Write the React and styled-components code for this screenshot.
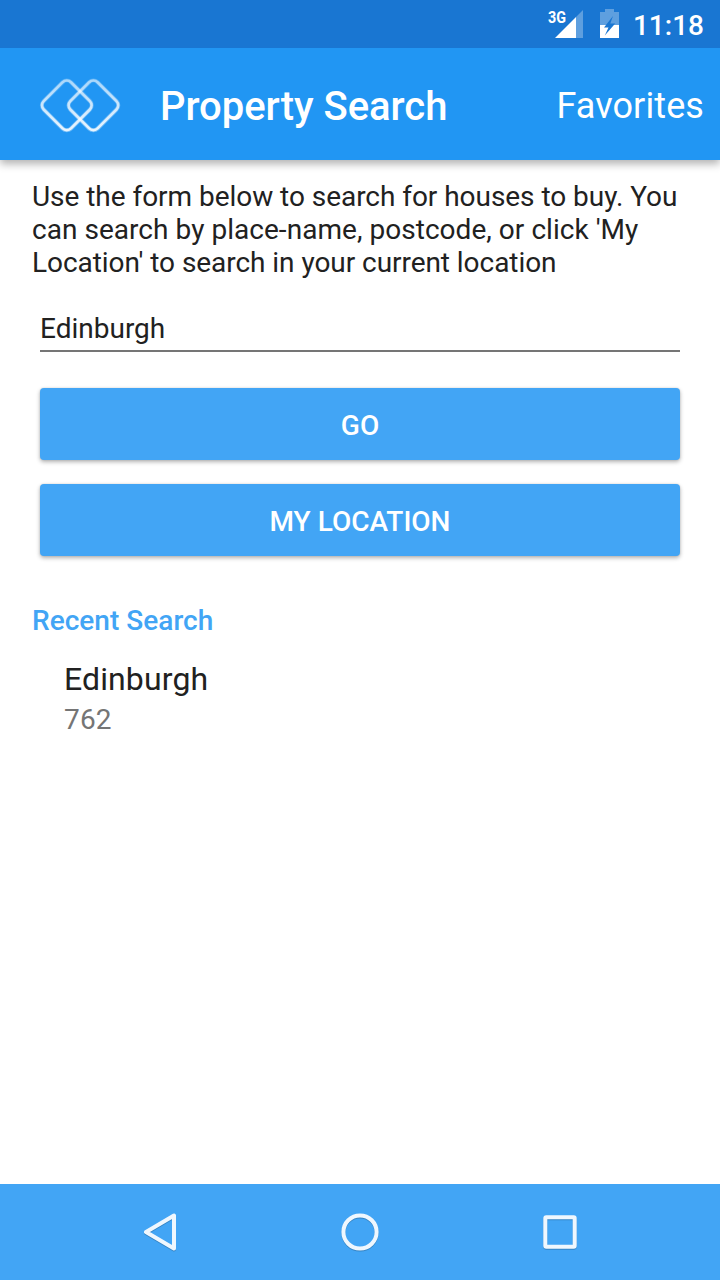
import React from "react";
import styled, { createGlobalStyle } from "styled-components";

const GlobalStyle = createGlobalStyle`
  *, *::before, *::after { box-sizing: border-box; }
  body { margin: 0; background: #fff; font-family: Roboto, sans-serif; color: #212121; }
`;
const Screen = styled.div`
  width: 720px; height: 1280px; display: flex; flex-direction: column; background: #fff; overflow: hidden;
`;
const StatusBar = styled.header`
  height: 48px; flex: none; background: #1976d2; color: #fff;
  display: flex; align-items: center; justify-content: flex-end; padding-right: 16px;
`;
const StatusIcons = styled.svg`
  width: 84px; height: 48px; flex: none; margin-right: 5px;
`;
const Clock = styled.time`
  font-size: 28px; font-weight: 500; line-height: 48px; padding-top: 3px;
`;
const Toolbar = styled.div`
  height: 112px; flex: none; background: #2196f3; color: #fff; padding: 4px 16px 0 32px;
  display: flex; align-items: center; box-shadow: 0 4px 8px rgba(0,0,0,.3); clip-path: inset(0 0 -16px 0);
`;
const Logo = styled.svg`
  width: 96px; height: 64px; margin-right: 32px;
`;
const Title = styled.h1`
  margin: 0; padding-top: 2px; flex: 1; font-size: 40px; font-weight: 500; line-height: 48px; letter-spacing: -0.03px;
`;
const Action = styled.a`
  font-size: 36px; line-height: 48px; letter-spacing: 0.1px;
`;
const Content = styled.main`
  flex: 1; padding: 20px 32px 0; display: flex; flex-direction: column;
`;
const Intro = styled.p`
  margin: 0; font-size: 28px; line-height: 33px; white-space: nowrap;
`;
const Line = styled.span`
  display: block; letter-spacing: ${(p) => p.$tracking}px;
`;
const Field = styled.input`
  margin: 28px 8px 0; height: 45px; padding: 0; border: 0; border-bottom: 2px solid #757575;
  font: 28px/33px Roboto, sans-serif; color: #212121; outline: 0; border-radius: 0;
`;
const Button = styled.button`
  height: 72px; margin: ${(p) => p.$gap}px 8px 0; padding: 2px 0 0; border: 0; border-radius: 4px;
  background: #42a5f5; color: #fff; font: 500 28px/33px Roboto, sans-serif;
  box-shadow: 0 2px 4px rgba(0,0,0,.3), 0 0 2px rgba(0,0,0,.12);
`;
const SectionTitle = styled.h2`
  margin: 48px 0 0; color: #42a5f5; font-size: 28px; font-weight: 500; line-height: 33px; letter-spacing: 0.03px;
`;
const Recent = styled.div`
  padding: 23px 32px 0;
`;
const Place = styled.div`
  font-size: 32px; line-height: 38px; letter-spacing: 0.12px;
`;
const Count = styled.div`
  font-size: 28px; line-height: 33px; color: #757575; margin-top: 5px; letter-spacing: 0.2px;
`;
const NavBar = styled.nav`
  height: 96px; flex: none; background: #42a5f5; display: flex; justify-content: center; align-items: center; gap: 152px;
`;
const NavIcon = styled.svg`
  width: 48px; height: 48px; fill: none; stroke: #eff7fe; stroke-width: 4px; stroke-linejoin: round;
  filter: drop-shadow(0 1px 0.5px rgba(0,0,0,.2));
`;

const Diamond = ({ cx }) => (
  <path
    transform={`translate(${cx} 105.3)`}
    d="M-4.2 -23.1A6 6 0 0 1 4.2 -23.1L23.1 -4.2A6 6 0 0 1 23.1 4.2L4.2 23.1A6 6 0 0 1 -4.2 23.1L-23.1 4.2A6 6 0 0 1 -23.1 -4.2Z"
  />
);

export default function App() {
  return (
    <Screen>
      <GlobalStyle />
      <StatusBar>
        <StatusIcons viewBox="544 0 84 48">
          <text x="548" y="23" fill="#fff" fontFamily="Roboto" fontSize="17" fontWeight="700" textLength="18" lengthAdjust="spacingAndGlyphs">3G</text>
          <path d="M583 10V38H576V17Z" fill="#fff" fillOpacity=".3" />
          <path d="M576 17V38H555Z" fill="#fff" />
          <path d="M605 9h9v3h5v13h-19V12h5z" fill="#fff" fillOpacity=".3" />
          <path d="M600 25h19v13h-19z" fill="#fff" />
          <path d="M613 16L604 27.5H608.5L604.8 35.5L615.2 23.5H610.3Z" fill="#1976d2" />
        </StatusIcons>
        <Clock>11:18</Clock>
      </StatusBar>
      <Toolbar>
        <Logo viewBox="32 74 96 64" fill="none" stroke="url(#logoFade)">
          <defs>
            <linearGradient id="logoFade" gradientUnits="userSpaceOnUse" x1="0" y1="-25" x2="0" y2="25">
              <stop offset="0" stopColor="#fff" stopOpacity=".52" />
              <stop offset="1" stopColor="#fff" stopOpacity=".85" />
            </linearGradient>
          </defs>
          <g strokeWidth="2.6">
            <Diamond cx={66.8} />
            <Diamond cx={93.4} />
          </g>
          <g strokeWidth="4.2" opacity=".4">
            <Diamond cx={66.8} />
            <Diamond cx={93.4} />
          </g>
        </Logo>
        <Title>Property Search</Title>
        <Action>Favorites</Action>
      </Toolbar>
      <Content>
        <Intro>
          <Line $tracking={-0.04}>Use the form below to search for houses to buy. You</Line>
          <Line $tracking={0.04}>can search by place-name, postcode, or click 'My</Line>
          <Line $tracking={-0.05}>Location' to search in your current location</Line>
        </Intro>
        <Field defaultValue="Edinburgh" aria-label="Location" />
        <Button $gap={36}>GO</Button>
        <Button $gap={24}>MY LOCATION</Button>
        <SectionTitle>Recent Search</SectionTitle>
        <Recent>
          <Place>Edinburgh</Place>
          <Count>762</Count>
        </Recent>
      </Content>
      <NavBar>
        <NavIcon viewBox="0 0 48 48"><path d="M10 24L38 7.5V40.5Z" /></NavIcon>
        <NavIcon viewBox="0 0 48 48"><circle cx="24" cy="24" r="16.6" /></NavIcon>
        <NavIcon viewBox="0 0 48 48"><rect x="9.3" y="9.3" width="29.4" height="29.4" rx="1" /></NavIcon>
      </NavBar>
    </Screen>
  );
}
